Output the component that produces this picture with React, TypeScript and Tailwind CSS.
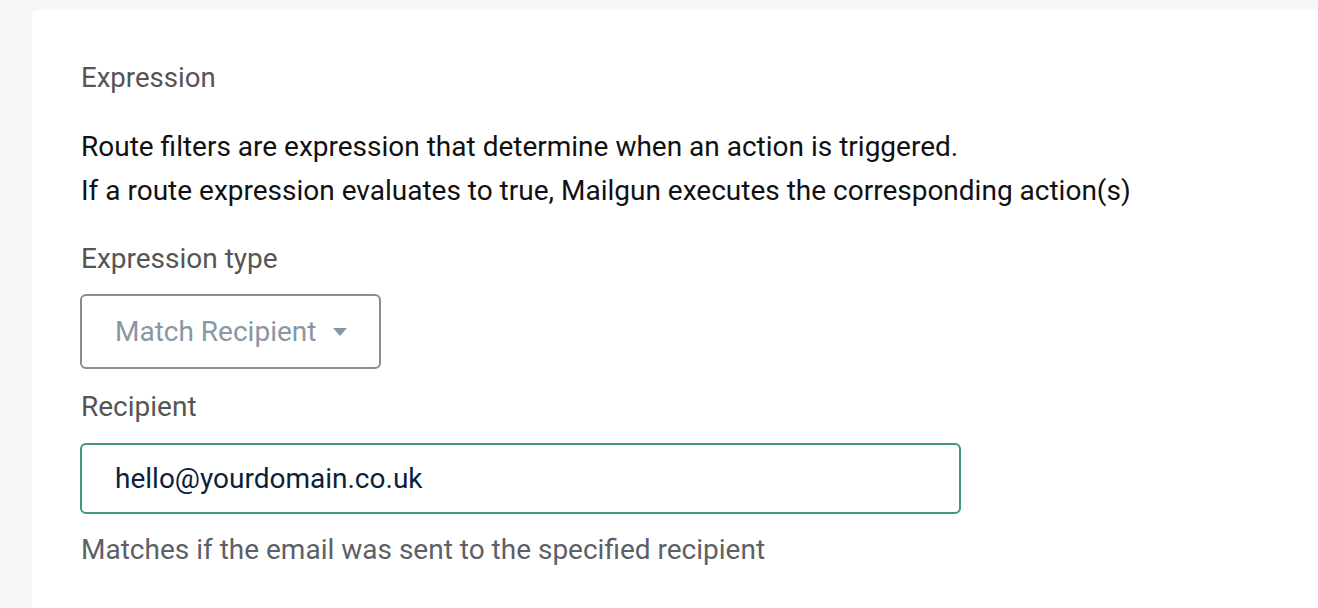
export default function App() {
  return (
    <div className="h-[608px] overflow-hidden bg-[#f6f7f9] pl-8 pt-[10px]" style={{ fontFamily: "Roboto, 'Noto Sans', sans-serif" }}>
      <div className="h-[640px] rounded-tl-[5px] bg-white pl-[49px] pt-[50px]">
        <div className="text-[27.6px] leading-[36px] text-[#555555]">Expression</div>
        <div className="mt-[29px] text-[28px] leading-[44px] text-[#111111]">
          <div>Route filters are expression that determine when an action is triggered.</div>
          <div>If a route expression evaluates to true, Mailgun executes the corresponding action(s)</div>
        </div>
        <div className="mt-[28px] text-[28px] leading-[36px] text-[#555555]">Expression type</div>
        <div className="-ml-px mt-[17px] flex h-[75px] w-[301px] items-center rounded-[6px] border-2 border-[#8c8c8c] pl-[33px]">
          <span className="text-[28px] text-[#8797a3]">Match Recipient</span>
          <svg className="ml-[17px]" width="14" height="8" viewBox="0 0 14 8">
            <path d="M0 0 L14 0 L7 8 Z" fill="#8797a3" />
          </svg>
        </div>
        <div className="mt-[20px] text-[28px] leading-[36px] text-[#555555]">Recipient</div>
        <div className="-ml-px mt-[18px] flex h-[71px] w-[881px] items-center rounded-[6px] border-2 border-[#409970] pl-[33px]">
          <span className="text-[28px] text-[#0c1f3b]">hello@yourdomain.co.uk</span>
        </div>
        <div className="mt-[18px] text-[28px] leading-[36px] text-[#5d6067]">Matches if the email was sent to the specified recipient</div>
      </div>
    </div>
  );
}
